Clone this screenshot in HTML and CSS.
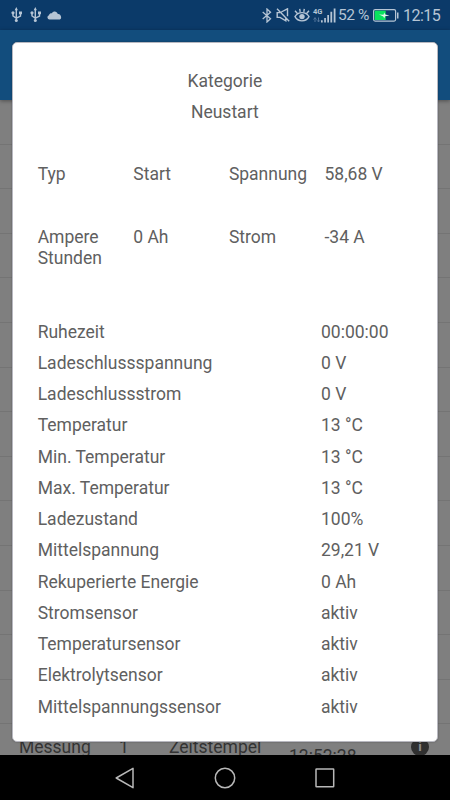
FILE: index.html
```html
<!DOCTYPE html>
<html lang="de">
<head>
<meta charset="utf-8">
<title>Neustart</title>
<link rel="stylesheet" href="styles.css">
</head>
<body>
<header class="status">
  <div class="status-left">
    <svg class="usb" width="12" height="16" viewBox="0 0 12 16"><path d="M5.3 2v12M2 6v3l3.3 2.200L9.500 9V5.500" fill="none" stroke="currentColor" stroke-width="1.4"/><path d="M5.3 0 3.700 3.200h3.200zM8 4.400h3v2.800H8z" fill="currentColor"/><circle cx="2" cy="5.8" r="1.6" fill="currentColor"/><circle cx="5.3" cy="13.5" r="1.5" fill="currentColor"/></svg>
    <svg class="usb" width="12" height="16" viewBox="0 0 12 16"><path d="M5.3 2v12M2 6v3l3.3 2.200L9.500 9V5.500" fill="none" stroke="currentColor" stroke-width="1.4"/><path d="M5.3 0 3.700 3.200h3.200zM8 4.400h3v2.800H8z" fill="currentColor"/><circle cx="2" cy="5.8" r="1.6" fill="currentColor"/><circle cx="5.3" cy="13.5" r="1.5" fill="currentColor"/></svg>
    <svg class="cloud" width="15" height="9" viewBox="0 0 15 9"><path d="M2.500 8.500A2.200 2.200 0 0 1 2 4.200C2.300 2.300 4 2 4.800 2.200 6.300-.4 10-.2 10.800 3c1.500-.4 3 1 3.300 3 .2 1.500-.8 2.500-2 2.500z" fill="currentColor"/></svg>
  </div>
  <div class="status-right">
    <svg class="bt" width="10" height="15" viewBox="0 0 10 15"><path d="m.7 4 7.800 6.700L5 14V1l3.500 3.200L.7 11" fill="none" stroke="currentColor" stroke-width="1.3"/></svg>
    <svg class="mute" width="14" height="14" viewBox="0 0 14 14"><path d="M1 .8l12.200 12.400M4 4.600H1.200v4.800H4l5.800 3.400V10M5.300 4l6.200-3.200v7.500" fill="none" stroke="currentColor" stroke-width="1.4"/></svg>
    <svg class="eye" width="16" height="15" viewBox="0 0 16 15"><path d="M1 8.700C4 3.200 12 3.200 15 8.700c-3 5.600-11 5.600-14 0zM3.200 5.200 1 2.700M6.200 3.800 5.700.8M9.800 3.800l.5-3M12.800 5.200 15 2.700" fill="none" stroke="currentColor" stroke-width="1.4"/><circle cx="8" cy="8.6" r="2.7" fill="currentColor"/></svg>
    <div class="net"><span class="net-type">4G</span><svg width="23" height="15" viewBox="0 0 23 15"><path d="M8 14.500v-2.300h1.700v2.300zM11.200 14.500V10h1.700v4.500zM14.300 14.500V7H16v7.500zM17.400 14.500V3.700h1.800v10.800zM20.700 14.500V.5h1.800v14z" fill="currentColor"/><path d="M2 14v-4.500M.5 11.500 2 9.800l1.500 1.700M5.500 9.500V14M4 12.300l1.500 1.600L7 12.300" fill="none" stroke="#53759c"/></svg></div>
    <span class="percent">52 %</span>
    <svg class="battery" width="26" height="13" viewBox="0 0 26 13"><rect x=".6" y=".6" width="22" height="11.500" rx="1.500" fill="none" stroke="currentColor" stroke-width="1.200"/><path d="M24 3.500h1.500v6H24z" fill="currentColor"/><path d="M1.700 1.700h11V11h-11z" fill="#08e35e"/><path d="m6 5.600 4.500.2.700-2.300 1 2 4.300 1-4.500.8-.7 2.200-1-2z" fill="#e4f3ef"/></svg>
    <span class="clock">12:15</span>
  </div>
</header>
<div class="appbar"></div>
<main class="list">
  <div class="item"></div><div class="item"></div><div class="item"></div><div class="item"></div><div class="item"></div><div class="item"></div><div class="item"></div><div class="item"></div><div class="item"></div><div class="item"></div><div class="item"></div><div class="item"></div><div class="item"></div><div class="item"></div>
  <div class="item last"><span>Messung</span><span>1</span><span>Zeitstempel</span><span class="time">12:52:28</span><i class="info">i</i></div>
</main>
<nav class="nav">
  <svg width="20" height="22" viewBox="0 0 20 22"><path d="M1.200 11 18 1.300v19.400z" fill="none" stroke="currentColor" stroke-width="1.500" stroke-linejoin="round"/></svg>
  <svg width="22" height="22" viewBox="0 0 22 22"><circle cx="11" cy="11" r="9.700" fill="none" stroke="currentColor" stroke-width="1.500"/></svg>
  <svg width="20" height="20" viewBox="0 0 20 20"><rect x="1" y="1" width="17.700" height="17.700" rx=".5" fill="none" stroke="currentColor" stroke-width="1.500"/></svg>
</nav>
<section class="dialog">
  <div class="title">Kategorie</div>
  <div class="title">Neustart</div>
  <div class="summary">
    <span>Typ</span><span>Start</span><span>Spannung</span><span>58,68 V</span>
    <span>Ampere Stunden</span><span>0 Ah</span><span>Strom</span><span>-34 A</span>
  </div>
  <div class="details">
    <span>Ruhezeit</span><span>00:00:00</span>
    <span>Ladeschlussspannung</span><span>0 V</span>
    <span>Ladeschlussstrom</span><span>0 V</span>
    <span>Temperatur</span><span>13 °C</span>
    <span>Min. Temperatur</span><span>13 °C</span>
    <span>Max. Temperatur</span><span>13 °C</span>
    <span>Ladezustand</span><span>100%</span>
    <span>Mittelspannung</span><span>29,21 V</span>
    <span>Rekuperierte Energie</span><span>0 Ah</span>
    <span>Stromsensor</span><span>aktiv</span>
    <span>Temperatursensor</span><span>aktiv</span>
    <span>Elektrolytsensor</span><span>aktiv</span>
    <span>Mittelspannungssensor</span><span>aktiv</span>
  </div>
</section>
</body>
</html>
```
FILE: styles.css
```css
* { box-sizing: border-box; }
body {
  margin: 0;
  height: 800px;
  overflow: hidden;
  position: relative;
  display: flex;
  flex-direction: column;
  background: #7f7f7f;
  color: #606060;
  font: 17.5px/20.5px Roboto, sans-serif;
}
svg { display: block; flex: none; }
.status {
  height: 30px;
  flex: none;
  display: flex;
  justify-content: space-between;
  padding: 0 10px 0 11px;
  background: #0b3a69;
  color: #b6c5d5;
}
.status-left, .status-right { display: flex; align-items: center; }
.usb { margin-right: 7px; }
.cloud { margin-left: -2px; }
.status-right { white-space: nowrap; }
.bt { margin-right: 4px; }
.mute { margin-right: 4px; }
.eye { margin-right: 3px; }
.net { position: relative; margin-right: 2px; }
.net-type {
  position: absolute;
  left: 0;
  top: -1px;
  font: bold 7.5px/9px Roboto, sans-serif;
}
.percent { width: 31px; margin-right: 4px; font-size: 15.5px; letter-spacing: -.4px; }
.battery { margin-right: 4px; }
.clock { width: 37px; padding-top: 2px; font-size: 16px; letter-spacing: -.5px; }
.appbar {
  height: 70px;
  flex: none;
  background: #124d7d;
  box-shadow: 0 1px 4px rgba(0, 0, 0, .4);
  z-index: 1;
}
.list { flex: 1; min-height: 0; overflow: hidden; }
.item { height: 44.6px; border-bottom: 1px solid #747474; }
.last {
  display: grid;
  grid-template-columns: 100px 50px 120px 122px 20px;
  padding: 12.5px 0 0 19px;
  border: 0;
  color: #333;
}
.time { padding-top: 9px; }
.info {
  width: 18px;
  height: 18px;
  margin-top: 1px;
  border-radius: 50%;
  background: #303030;
  color: #909090;
  font: bold 13px/18px Roboto, sans-serif;
  text-align: center;
}
.nav {
  height: 45px;
  flex: none;
  display: flex;
  align-items: center;
  justify-content: center;
  gap: 79px;
  background: #000;
  color: #b8b8b8;
}
.dialog {
  position: absolute;
  left: 12px;
  top: 42px;
  width: 426px;
  height: 700px;
  padding: 27.5px 25px 0 24.7px;
  border: 1px solid #b8b8c0;
  border-radius: 5px;
  background: #fff;
  box-shadow: 0 0 2px rgba(0, 0, 0, .35);
  z-index: 2;
}
.title { height: 31.25px; text-align: center; }
.summary {
  display: grid;
  grid-template-columns: repeat(4, 95.6px);
  grid-template-rows: 63px 94.5px;
  margin-top: 31px;
}
.details {
  display: grid;
  grid-template-columns: 283.3px 1fr;
  grid-auto-rows: 31.25px;
}
```
